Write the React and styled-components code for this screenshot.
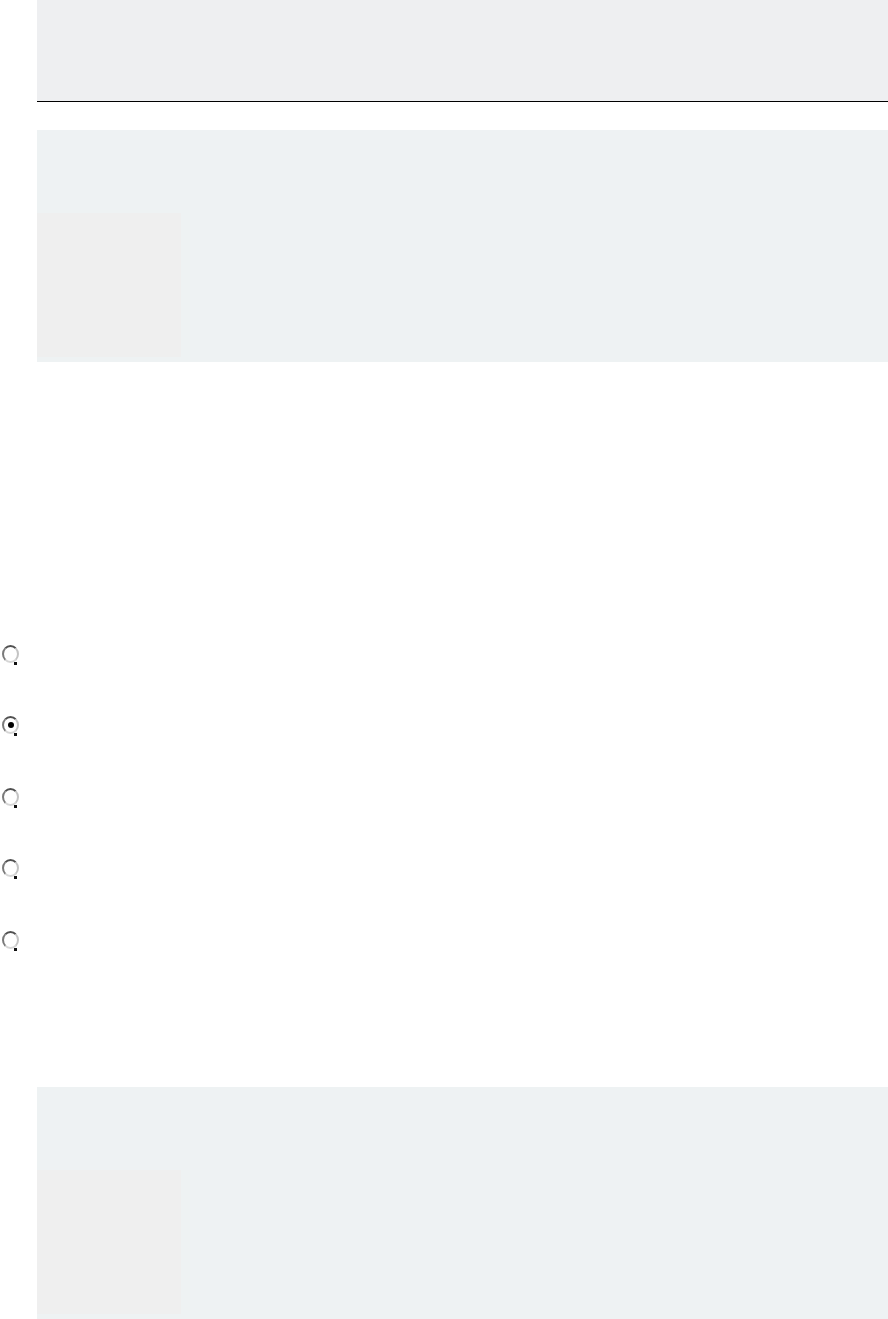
import React from "react";
import styled, { createGlobalStyle } from "styled-components";

const Global = createGlobalStyle`
  html, body { margin: 0; padding: 0; background: #ffffff; }
  body { font-family: "Liberation Sans", Arial, sans-serif; }
`;

const Page = styled.div`
  width: 888px;
  display: flex;
  flex-direction: column;
`;

const Header = styled.header`
  margin-left: 37px;
  height: 101px;
  background: #eeeff1;
  border-bottom: 1px solid #000;
`;

const Panel = styled.section`
  margin-left: 37px;
  margin-top: ${(p) => p.$top}px;
  height: 232px;
  box-sizing: border-box;
  padding: 83px 0 5px 0;
  background: #eef2f3;
  display: flex;
  align-items: flex-start;
`;

const Thumb = styled.div`
  width: 144px;
  height: 144px;
  background: #efefef;
`;

const RadioList = styled.div`
  margin-top: 256px;
  display: flex;
  flex-direction: column;
  padding-left: 2px;
`;

const RadioRow = styled.label`
  height: 71.5px;
  display: flex;
  align-items: center;
`;

const RadioMark = styled.span`
  position: relative;
  width: 17px;
  height: 18px;
  box-sizing: border-box;
  border-radius: 50%;
  border: 2.5px solid;
  border-color: #505050 #c4c4c4 #d6d6d6 #7a7a7a;
  background: #fff;
  display: flex;
  align-items: center;
  justify-content: center;

  &::before {
    content: "";
    width: 6px;
    height: 6px;
    border-radius: 50%;
    background: ${(p) => (p.$checked ? "#000" : "transparent")};
  }

  &::after {
    content: "";
    position: absolute;
    right: 0px;
    bottom: -4px;
    width: 3px;
    height: 3px;
    background: #111;
  }
`;

const options = [false, true, false, false, false];

export default function App() {
  return (
    <>
      <Global />
      <Page>
        <Header />
        <Panel $top={28}>
          <Thumb />
        </Panel>
        <RadioList>
          {options.map((checked, i) => (
            <RadioRow key={i}>
              <RadioMark $checked={checked} />
            </RadioRow>
          ))}
        </RadioList>
        <Panel $top={111}>
          <Thumb />
        </Panel>
      </Page>
    </>
  );
}
